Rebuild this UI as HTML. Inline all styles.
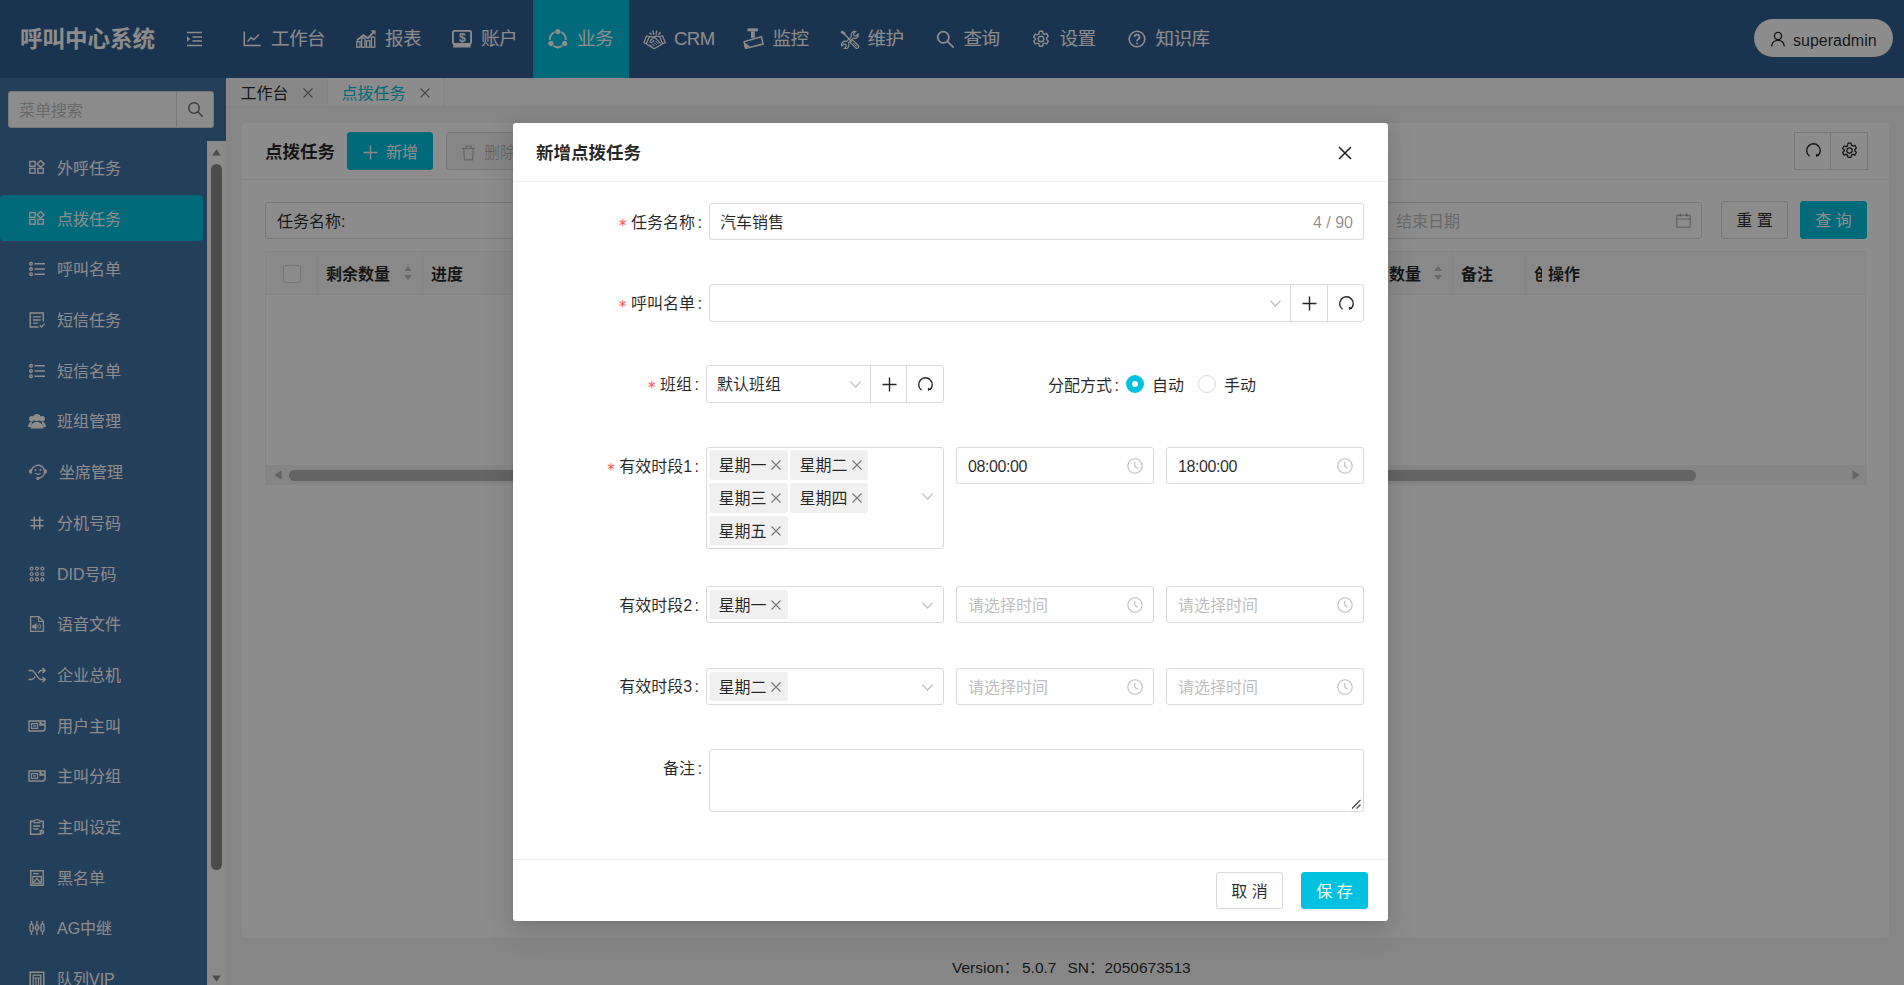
<!DOCTYPE html>
<html lang="zh-CN">
<head>
<meta charset="utf-8">
<title>呼叫中心系统</title>
<style>
*{box-sizing:border-box;margin:0;padding:0}
html,body{width:1904px;height:985px;overflow:hidden}
body{font-family:"Liberation Sans","Noto Sans CJK SC",sans-serif;font-size:16px;color:rgba(0,0,0,.85);background:#f4f4f4;position:relative}
svg{display:block}
.abs{position:absolute}
/* ---------- header ---------- */
#hdr{position:absolute;left:0;top:0;width:1904px;height:78px;background:#315f90;color:#fff}
#logo{position:absolute;left:20px;top:0;line-height:79px;font-size:22.5px;font-weight:700;white-space:nowrap}
#fold{position:absolute;left:186px;top:31px}
#nav{position:absolute;left:227px;top:0;height:78px;display:flex}
#nav .it{height:78px;padding:0 16px;display:flex;align-items:center;font-size:18.6px;letter-spacing:-0.6px;white-space:nowrap;line-height:76px}
#nav .it svg{width:18px;height:18px;margin-right:10px;flex:none}
#nav .it.on{background:#00c2e0}
#user{position:absolute;left:1754px;top:19px;width:139px;height:38px;border-radius:19px;background:#fff;color:rgba(0,0,0,.85);font-size:16px;line-height:43px;padding-left:39px;white-space:nowrap}
#user svg{position:absolute;left:16px;top:12px}
/* ---------- sidebar ---------- */
#side{position:absolute;left:0;top:78px;width:226px;height:907px;background:#4373a5;color:#fff;overflow:hidden}
#search{position:absolute;left:8px;top:13px;width:206px;height:37px;background:#fff;border:1px solid #d9d9d9;border-radius:3px}
#search span{position:absolute;left:10px;top:0;line-height:37px;color:#bfbfbf;font-size:16px}
#search i{position:absolute;left:167px;top:0;width:1px;height:35px;background:#d9d9d9}
#search svg{position:absolute;left:178px;top:9px}
#menu{position:absolute;left:0;top:63px;width:207px}
#menu .mi{position:absolute;left:0;width:203px;height:46.7px;line-height:50.3px;font-size:16px;padding-left:57px;white-space:nowrap;border-radius:4px}
#menu .mi.on{background:#00c2e0}
#menu .mi svg{position:absolute;left:29px;top:16px;width:16px;height:16px}
#sbar{position:absolute;left:207px;top:63px;width:19px;height:844px;background:#fcfcfc}
#sbar .th{position:absolute;left:4px;top:23px;width:11px;height:706px;border-radius:6px;background:#8b8b8b}
/* ---------- main ---------- */
#tabs{position:absolute;left:226px;top:78px;width:1678px;height:29px;background:#fafafa;border-bottom:1px solid #eee}
.tab{position:absolute;top:0;height:28px;line-height:31.5px;font-size:16px;white-space:nowrap;background:#f7f7f7;border-right:1px solid #eee}
.tab.on{background:#fff;color:#00c2e0}
.tab svg{position:absolute;top:10px}
#card{position:absolute;left:242px;top:123px;width:1647px;height:815px;background:#fff;border-radius:4px}
#chead{position:absolute;left:0;top:0;width:100%;height:57px;border-bottom:1px solid #f0f0f0}
.btn{position:absolute;height:37px;line-height:37px;border:1px solid #d9d9d9;border-radius:3px;background:#fff;font-size:16px;text-align:center;white-space:nowrap}
.btn.pri{background:#00c2e0;border-color:#00c2e0;color:#fff}
.inp{position:absolute;height:37px;border:1px solid #d9d9d9;border-radius:3px;background:#fff;font-size:16px;line-height:37px;white-space:nowrap}
.ph{color:#bfbfbf}
#foot{position:absolute;left:226px;top:954px;width:1678px;height:28px;font-size:15.500px;line-height:28px;white-space:nowrap}
#foot span{position:absolute;top:0}
.vs{top:0;width:1px;height:43px;background:#f0f0f0}
.srt{top:13px;width:9px;height:16px}
.srt:before,.srt:after{content:"";position:absolute;left:0;border:4.500px solid transparent}
.srt:before{top:-3px;border-bottom:5.500px solid #bfbfbf}
.srt:after{top:10px;border-top:5.500px solid #bfbfbf}
/* ---------- mask / modal ---------- */
#mask{position:absolute;left:0;top:0;width:1904px;height:985px;background:rgba(0,0,0,.45)}
#modal{position:absolute;left:513px;top:123px;width:875px;height:798px;background:#fff;border-radius:3px;box-shadow:0 3px 6px -4px rgba(0,0,0,.12),0 6px 16px 0 rgba(0,0,0,.08),0 9px 28px 8px rgba(0,0,0,.05)}
.lbl{position:absolute;text-align:right;line-height:39px;white-space:nowrap;font-size:16px}
.star{color:#ff4d4f;font-weight:400;font-family:"DejaVu Sans",sans-serif;font-size:15px;margin-right:4.500px;position:relative;top:2.500px}
.cl{margin-left:2.500px}
.fb{position:absolute;border:1px solid #d9d9d9;border-radius:3px;background:#fff;line-height:37px;font-size:16px;white-space:nowrap}
.fb .abs{top:0}
.fb svg.abs{top:auto}
.tag{position:absolute;width:79px;height:29.500px;line-height:31.500px;background:#f0f0f0;border-radius:3px;padding-left:9.500px;font-size:16px}
</style>
</head>
<body>
<!--HDR_S--><div id="hdr">
  <div id="logo">呼叫中心系统</div>
  <svg id="fold" width="17" height="16" viewBox="0 0 17 16" fill="none" stroke="#fff" stroke-width="1.3"><path d="M1 1.5h15M6.500 6h9.500M6.500 10h9.500M1 14.500h15"/><path d="M1 5.200l3.200 2.800L1 10.800z" fill="#fff" stroke="none"/></svg>
  <div id="nav">
    <div class="it"><svg viewBox="0 0 18 18" fill="none" stroke="#fff" stroke-width="1.500"><path d="M1.300 1.500v14H17.800"/><path d="M4.500 11.800l3.600-4.300 2.600 2.300 5.200-5.300" stroke-width="1.400"/></svg>工作台</div>
    <div class="it"><svg viewBox="0 0 20 18" style="width:20px;margin-left:-1px;margin-right:9px" fill="none" stroke="#fff" stroke-width="1.300"><rect x=".700" y="11.600" width="3.300" height="5.600"/><rect x="5.600" y="8" width="3.300" height="9.200"/><rect x="10.500" y="10.800" width="3.300" height="6.400"/><rect x="15.400" y="7.100" width="3.300" height="10.100"/><path d="M1 10.200l6.500-5 4.500 3 5.500-6" stroke-width="1.800"/><path d="M14.600 .200h4.900v4.900z" fill="#fff" stroke="none"/></svg>报表</div>
    <div class="it"><svg viewBox="0 0 20 18" style="width:20px;margin-left:-1px;margin-right:9px" fill="none" stroke="#fff"><rect x=".900" y=".900" width="18.200" height="13" rx="1.500" stroke-width="1.800"/><rect x="1.200" y="13.900" width="17.400" height="3.600" fill="#fff" stroke="none"/><text x="10" y="12.300" font-family="Liberation Sans,sans-serif" font-size="12" font-weight="700" fill="#fff" stroke="none" text-anchor="middle">$</text></svg>账户</div>
    <div class="it on"><svg viewBox="0 0 20 20" style="width:20px;height:20px;margin-left:-1px;margin-right:9px" fill="none" stroke="#fff" stroke-width="2"><path d="M13.140 3.140A7.900 7.900 0 0 1 17.670 10.990M14.330 16.770A7.900 7.900 0 0 1 5.270 16.770M1.930 10.990A7.900 7.900 0 0 1 6.460 3.140"/><circle cx="9.800" cy="2.600" r="2.600" fill="#fff" stroke="none"/><circle cx="2.900" cy="14.400" r="2.600" fill="#fff" stroke="none"/><circle cx="16.700" cy="14.400" r="2.600" fill="#fff" stroke="none"/></svg>业务</div>
    <div class="it"><svg viewBox="0 0 23 19" style="width:23px;height:19px;margin-left:-2px;margin-right:8px" fill="none" stroke="#fff" stroke-width="1.200" stroke-linejoin="round"><path d="M.800 12.800L3.600 5.800l2.600.9-2.800 7.100zM16.800 6.700l2.600-.9 3 6.800-2.800 1.200z"/><path d="M6 6.900q2.600-.6 4.500.2l1.500-.7q2.600-.5 5 .4"/><path d="M3.500 13.900l6.300 4.200q1.700.7 3.200-.4l6.600-3.900"/><path d="M7 10.800l3.300-3.200 2 .3 5.200 5.400M6.600 11.500q1.200 1.400 3 .2l1.600-1.400"/><path d="M9 13.500l2.600 2.600M11 12.300l2.800 2.800M12.800 11.200l2.700 2.700M6.500 14.500l3 2.200" stroke-width="1"/><path d="M6.500 2.700l2 2M9.800.500l1 4.200M13.800.500l-.8 4.200M17.500 2.200l-2 2.500" stroke-width="1.400"/></svg>CRM</div>
    <div class="it"><svg viewBox="0 0 21 21" style="width:21px;height:21px;margin-left:-3.5px;margin-right:8.5px;position:relative;top:-1px" fill="#fff"><rect x="4.400" y=".400" width="10.500" height="2.900"/><rect x="8" y="3.300" width="3.800" height="6.500"/><path d="M1.200 13.600L18.500 8.800l1.500 7.300L2.600 20.400z" fill="none" stroke="#fff" stroke-width="1.500"/><path d="M.500 14l6.500 4.300-5 2z"/></svg>监控</div>
    <div class="it"><svg viewBox="0 0 20 19" style="width:20px;height:19px;margin-left:-1px;margin-right:8px" fill="none" stroke="#fff" stroke-width="1.200"><path d="M1.200 1.200l3.800 3" stroke-width="2.600"/><path d="M4.600 4.300l6.200 6.400" stroke-width="1.400"/><path d="M10 12.300l2.400-2.400 5.800 5.600a1.700 1.700 0 0 1-2.400 2.400z"/><path d="M13 12.800l3.700 3.700" stroke-width=".9"/><path d="M11.600 6.300a3.400 3.400 0 0 1 4-4.800l-2.100 2.100.5 2 2 .5 2.100-2.100a3.400 3.400 0 0 1-4.800 4l-5.200 5.300M11.600 6.300l-5.200 5.300a3.400 3.400 0 0 0-4.600 4.400l2-2 2 .5.500 2-2 2a3.400 3.400 0 0 0 4.200-4.700"/></svg>维护</div>
    <div class="it"><svg viewBox="0 0 18 18" fill="none" stroke="#fff" stroke-width="1.700"><circle cx="7.300" cy="7.300" r="5.600"/><path d="M11.400 11.400l5.800 5.800" stroke-linecap="round"/></svg>查询</div>
    <div class="it"><svg viewBox="0 0 18 18" fill="none" stroke="#fff" stroke-width="1.400"><circle cx="9" cy="9" r="2.800"/><path d="M7.400 1.200h3.200l.5 2.300 1.400.8 2.200-.8 1.600 2.800-1.700 1.600v1.600l1.700 1.600-1.600 2.800-2.200-.8-1.400.8-.5 2.300H7.400l-.5-2.300-1.400-.8-2.200.8-1.600-2.800 1.700-1.600V8.500L1.700 6.900l1.600-2.800 2.200.8 1.400-.8z" stroke-linejoin="round"/></svg>设置</div>
    <div class="it"><svg viewBox="0 0 18 18" fill="none" stroke="#fff" stroke-width="1.600"><circle cx="9" cy="9" r="7.800"/><path d="M6.500 7.100a2.500 2.500 0 1 1 3.700 2.200c-.8.500-1.200 1-1.200 2" stroke-width="1.700"/><circle cx="9" cy="13.400" r="1" fill="#fff" stroke="none"/></svg>知识库</div>
  </div>
  <div id="user"><svg width="16" height="16" viewBox="0 0 16 16" fill="none" stroke="rgba(0,0,0,.85)" stroke-width="1.400"><circle cx="8" cy="5" r="3.600"/><path d="M1.600 15.300c.4-3.600 3-5.900 6.400-5.900s6 2.300 6.400 5.900"/></svg>superadmin</div>
</div>
<!--HDR_E-->
<!--SIDE_S--><div id="side">
<div id="search"><span>菜单搜索</span><i></i><svg width="17" height="17" viewBox="0 0 17 17" fill="none" stroke="rgba(0,0,0,.55)" stroke-width="1.500"><circle cx="7" cy="7" r="5.200"/><path d="M10.800 10.800l5 5"/></svg></div>
<div id="menu">
<div class="mi" style="top:3.00px"><svg viewBox="0 0 16 14" style="height:14px" fill="none" stroke="#fff" stroke-width="1.400"><rect x=".800" y="1.500" width="5.300" height="4.800"/><rect x=".800" y="8.400" width="5.300" height="4.800"/><rect x="8.900" y="8.400" width="5.300" height="4.800"/><path d="M11.600 .500l3.500 3.400-3.500 3.400L8.100 3.900z"/></svg>外呼任务</div>
<div class="mi on" style="top:53.69px"><svg viewBox="0 0 16 14" style="height:14px" fill="none" stroke="#fff" stroke-width="1.400"><rect x=".800" y="1.500" width="5.300" height="4.800"/><rect x=".800" y="8.400" width="5.300" height="4.800"/><rect x="8.900" y="8.400" width="5.300" height="4.800"/><path d="M11.600 .500l3.500 3.400-3.500 3.400L8.100 3.900z"/></svg>点拨任务</div>
<div class="mi" style="top:104.38px"><svg viewBox="0 0 16 16" fill="none" stroke="#fff" stroke-width="1.4"><path d="M5.500 2.800H16M5.500 8H16M5.500 13.200H16" stroke-width="1.500"/><circle cx="2" cy="2.800" r="1.300"/><circle cx="2" cy="8" r="1.300"/><circle cx="2" cy="13.200" r="1.300"/></svg>呼叫名单</div>
<div class="mi" style="top:155.07px"><svg viewBox="0 0 16 16" fill="none" stroke="#fff" stroke-width="1.400"><path d="M14.300 9.500V1H1.200v14h8.300"/><path d="M4 4.800h7.800M4 8h7.800M4 11.200h4.800" stroke-width="1.300"/><path d="M10.800 13.300l1.700 1.700 3-3.400" stroke-width="1.300"/></svg>短信任务</div>
<div class="mi" style="top:205.76px"><svg viewBox="0 0 16 16" fill="none" stroke="#fff" stroke-width="1.4"><path d="M5.500 2.800H16M5.500 8H16M5.500 13.200H16" stroke-width="1.500"/><circle cx="2" cy="2.800" r="1.300"/><circle cx="2" cy="8" r="1.300"/><circle cx="2" cy="13.200" r="1.300"/></svg>短信名单</div>
<div class="mi" style="top:256.45px"><svg viewBox="0 0 18 16" style="width:18px;left:28px" fill="#fff"><circle cx="9" cy="4.600" r="3.700"/><path d="M2.600 15.500c0-4.200 2.800-6.600 6.400-6.600s6.400 2.400 6.400 6.600z"/><circle cx="3.800" cy="5.800" r="2.700"/><circle cx="14.200" cy="5.800" r="2.700"/><path d="M0 14c0-3 1.600-5 4.200-5.200L3 14zM18 14c0-3-1.600-5-4.200-5.200L15 14z"/></svg>班组管理</div>
<div class="mi" style="top:307.14px;padding-left:59px"><svg viewBox="0 0 19 17" style="width:20px;height:18px;left:28px;top:14.5px" fill="none" stroke="#fff" stroke-width="1.400"><path d="M3.200 9.500A6.300 6.300 0 0 1 15.800 7.500c0 3.500-2.200 6.300-5.500 6.700" /><path d="M3.200 5.600c-1.600 0-2.300 1-2.300 2.300s.7 2.300 2.300 2.300zM15.800 5.600c1.600 0 2.300 1 2.300 2.300s-.7 2.300-2.300 2.300z" fill="#fff" stroke="none"/><circle cx="9.300" cy="14.600" r="1.500" fill="#fff" stroke="none"/><circle cx="7.200" cy="6.600" r="1" fill="#fff" stroke="none"/><circle cx="11.800" cy="6.600" r="1" fill="#fff" stroke="none"/><path d="M7 9.600c1.400 1.300 3.600 1.300 5 0" stroke-width="1.200"/></svg>坐席管理</div>
<div class="mi" style="top:357.83px"><svg viewBox="0 0 16 16" fill="none" stroke="#fff" stroke-width="1.500"><path d="M5.300 1.500v13M10.700 1.500v13M1.500 5.300h13M1.500 10.700h13"/></svg>分机号码</div>
<div class="mi" style="top:408.52px"><svg viewBox="0 0 16 16" fill="none" stroke="#fff" stroke-width="1.200"><circle cx="2.600" cy="2.600" r="1.500"/><circle cx="8" cy="2.600" r="1.500"/><circle cx="13.400" cy="2.600" r="1.500"/><circle cx="2.600" cy="8" r="1.500"/><circle cx="8" cy="8" r="1.500"/><circle cx="13.400" cy="8" r="1.500"/><circle cx="2.600" cy="13.400" r="1.500"/><circle cx="8" cy="13.400" r="1.500"/><circle cx="13.400" cy="13.400" r="1.500"/></svg>DID号码</div>
<div class="mi" style="top:459.21px"><svg viewBox="0 0 16 16" fill="none" stroke="#fff" stroke-width="1.300"><path d="M1.600 .700h8.300l4.500 4.500v10.100H1.600z"/><path d="M9.600 .800v4.700h4.700" stroke-width="1.100"/><path d="M3.600 9.200h1.600l2-1.600v6l-2-1.600H3.600z" fill="#fff" stroke-width=".6"/><path d="M8.600 8.800c.8 1 .8 2.400 0 3.400M10.300 7.600c1.500 1.800 1.500 4 0 5.800" stroke-width="1"/></svg>语音文件</div>
<div class="mi" style="top:509.90px"><svg viewBox="0 0 18 16" style="width:18px;left:28px" fill="none" stroke="#fff" stroke-width="1.400"><path d="M.500 3.500h3.200c3.500 0 5.600 9 9.200 9H17M.500 12.500h3.200c1.400 0 2.500-1.400 3.500-3M10.200 6.300c.9-1.500 1.800-2.800 2.700-2.800H17"/><path d="M14.500 1l2.700 2.500-2.700 2.500M14.500 10l2.700 2.500-2.700 2.500"/></svg>企业总机</div>
<div class="mi" style="top:560.59px"><svg viewBox="0 0 18 16" style="width:18px;left:28px" fill="none" stroke="#fff" stroke-width="1.500"><path d="M1 3h16v7.500c0 1.500-1 2.500-2.500 2.500H1z"/><rect x="3.600" y="5.600" width="6" height="4.800" stroke-width="1.100"/><path d="M5.200 7.400h2.800M5.200 8.800h2.800" stroke-width=".8"/><path d="M12.500 3.500v3.200h4" stroke-width="2.200"/></svg>用户主叫</div>
<div class="mi" style="top:611.28px"><svg viewBox="0 0 18 16" style="width:18px;left:28px" fill="none" stroke="#fff" stroke-width="1.500"><path d="M1 3h16v7.500c0 1.500-1 2.500-2.500 2.500H1z"/><rect x="3.600" y="5.600" width="6" height="4.800" stroke-width="1.100"/><path d="M5.200 7.400h2.800M5.200 8.800h2.800" stroke-width=".8"/><path d="M12.500 3.500v3.200h4" stroke-width="2.200"/></svg>主叫分组</div>
<div class="mi" style="top:661.97px"><svg viewBox="0 0 16 16" fill="none" stroke="#fff" stroke-width="1.500"><path d="M4.200 2.300H1.600v13h10.800"/><path d="M11.800 2.300h2.400v7.500"/><path d="M5 3.600V1.500l3-1 3 1v2.100z" stroke-width="1.200"/><path d="M4.300 7h7M4.300 10h5" stroke-width="1.300"/><circle cx="12.800" cy="12.800" r="1.700" stroke-width="1.300"/><path d="M10.500 11.300l4.600 3" stroke-width="1"/></svg>主叫设定</div>
<div class="mi" style="top:712.66px"><svg viewBox="0 0 16 16" fill="none" stroke="#fff" stroke-width="1.400"><path d="M1.800 .800h12.400v14.400H1.800z"/><path d="M4.200 3.600h5.400" stroke-width="1.300"/><rect x="3.800" y="6.500" width="8.400" height="6.800" stroke-width="1.200"/><path d="M4.200 13l3.800-4.600 3.800 4.600" stroke-width="1.200"/></svg>黑名单</div>
<div class="mi" style="top:763.35px"><svg viewBox="0 0 16 16" fill="none" stroke="#fff" stroke-width="1.300"><path d="M2.500 1v3M2.500 11.500V15M8 1v4M8 10.500V15M13.500 1v3M13.500 11.500V15"/><rect x="1" y="4" width="3" height="7.500" rx="1.500"/><rect x="6.600" y="5.200" width="2.800" height="5" rx="1.400"/><rect x="12" y="4" width="3" height="7.500" rx="1.500"/><path d="M4 8h2.600M9.400 8H12" stroke-width="1"/></svg>AG中继</div>
<div class="mi" style="top:814.04px"><svg viewBox="0 0 16 16" fill="none" stroke="#fff" stroke-width="1.500"><path d="M1.200 15.500V1.200h13.600v14.300"/><path d="M4.200 15.500V4.200h7.600v11.300" stroke-width="1.300"/><path d="M7 7v8.500M9.500 7v8.500M4.500 7h7" stroke-width="1.200"/></svg>队列VIP</div>
</div>
<div id="sbar"><svg class="abs" style="left:5px;top:8px" width="9" height="7" viewBox="0 0 9 7"><path d="M4.500 .300L8.800 6.500H.200z" fill="#8b8b8b"/></svg><div class="th"></div><svg class="abs" style="left:5px;top:834px" width="9" height="7" viewBox="0 0 9 7"><path d="M4.500 6.700L8.800 .500H.200z" fill="#8b8b8b"/></svg></div>
</div><!--SIDE_E-->
<!--MAIN_S--><div id="tabs">
  <div class="tab" style="left:0;width:102px;padding-left:14.500px">工作台<svg style="left:77px" width="10" height="10" viewBox="0 0 10 10" stroke="rgba(0,0,0,.5)" stroke-width="1.100"><path d="M.500 .500l9 9M9.500 .500l-9 9"/></svg></div>
  <div class="tab on" style="left:102px;width:116px;padding-left:13.500px">点拨任务<svg style="left:92px" width="10" height="10" viewBox="0 0 10 10" stroke="rgba(0,0,0,.5)" stroke-width="1.100"><path d="M.500 .500l9 9M9.500 .500l-9 9"/></svg></div>
</div>
<div id="card">
  <div id="chead">
    <div class="abs" style="left:23px;top:0;line-height:58px;font-size:17.500px;font-weight:700;white-space:nowrap">点拨任务</div>
    <div class="btn pri" style="left:105px;top:9px;height:38px;line-height:39px;width:86px;text-align:left;padding-left:38px"><svg class="abs" style="left:15px;top:12px" width="15" height="15" viewBox="0 0 15 15" stroke="#fff" stroke-width="1.300"><path d="M7.500 .500v14M.500 7.500h14"/></svg>新增</div>
    <div class="btn" style="left:204px;top:9px;height:38px;line-height:39px;width:90px;text-align:left;padding-left:37px;background:#f5f5f5;color:rgba(0,0,0,.25)"><svg class="abs" style="left:14px;top:11.500px" width="15" height="16" viewBox="0 0 15 16" fill="none" stroke="rgba(0,0,0,.25)" stroke-width="1.200"><path d="M1 3.500h13M5 3.200V1.200h5v2M2.800 3.800l.6 11h8.200l.6-11"/></svg>删除</div>
    <div class="btn" style="left:1552px;top:9px;height:38px;width:37px;border-radius:0"><svg class="abs" style="left:10px;top:9px" width="17" height="17" viewBox="0 0 17 17" fill="none" stroke="rgba(0,0,0,.85)" stroke-width="1.400"><path d="M4.600 14.200A6.800 6.800 0 1 1 12.600 14"/><path d="M14.300 13.100l-3.200 1.900-.3-3.300z" fill="rgba(0,0,0,.85)" stroke="none"/></svg></div>
    <div class="btn" style="left:1588px;top:9px;height:38px;width:38px;border-radius:0"><svg class="abs" style="left:10px;top:9px" width="17" height="17" viewBox="0 0 18 18" fill="none" stroke="rgba(0,0,0,.85)" stroke-width="1.300"><circle cx="9" cy="9" r="2.800"/><path d="M7.400 1.200h3.200l.5 2.300 1.400.8 2.200-.8 1.600 2.800-1.700 1.600v1.600l1.700 1.600-1.600 2.800-2.200-.8-1.400.8-.5 2.300H7.400l-.5-2.300-1.400-.8-2.200.8-1.600-2.800 1.700-1.600V8.500L1.700 6.900l1.600-2.800 2.200.8 1.400-.8z" stroke-linejoin="round"/></svg></div>
  </div>
  <!-- filter row -->
  <div class="inp" style="left:23px;top:79px;width:400px;padding-left:11px">任务名称:</div>
  <div class="inp" style="left:1000px;top:79px;width:460px;padding-left:153px"><span class="ph">结束日期</span><svg class="abs" style="left:433px;top:10px" width="15" height="15" viewBox="0 0 15 15" fill="none" stroke="rgba(0,0,0,.3)" stroke-width="1.200"><rect x=".800" y="2.200" width="13.400" height="12"/><path d="M.800 6h13.400M4.200 .400v3.400M10.800 .400v3.400"/></svg></div>
  <div class="btn" style="left:1479px;top:78px;width:67px;height:38px;line-height:38px">重 置</div>
  <div class="btn pri" style="left:1558px;top:78px;width:67px;height:38px;line-height:38px">查 询</div>
  <!-- table -->
  <div id="tbl" class="abs" style="left:23px;top:128px;width:1601px;height:214px;border:1px solid #f0f0f0;border-bottom:0">
    <div class="abs" style="left:0;top:0;width:1599px;height:43px;background:#fafafa;border-bottom:1px solid #f0f0f0;font-weight:700;font-size:16px;line-height:45px;white-space:nowrap;overflow:hidden">
      <i class="abs" style="left:17px;top:13px;width:18px;height:18px;border:1px solid #d9d9d9;border-radius:3px;background:#fff"></i>
      <i class="abs vs" style="left:51px"></i>
      <span class="abs" style="left:60px;top:0">剩余数量</span>
      <span class="abs srt" style="left:138px"></span>
      <i class="abs vs" style="left:156px"></i>
      <span class="abs" style="left:165px;top:0">进度</span>
      <span class="abs" style="left:1091px;top:0">剩余数量</span>
      <span class="abs srt" style="left:1168px"></span>
      <i class="abs vs" style="left:1186px"></i>
      <span class="abs" style="left:1195px;top:0">备注</span>
      <i class="abs vs" style="left:1259px"></i>
      <span class="abs" style="left:1268px;top:0;width:7.500px;overflow:hidden">创建</span>
      <span class="abs" style="left:1282px;top:0">操作</span>
    </div>
  </div>
  <div id="hsb" class="abs" style="left:23px;top:342px;width:1602px;height:20px;background:#f2f2f2">
    <svg class="abs" style="left:9px;top:5px" width="8" height="10" viewBox="0 0 8 10"><path d="M.300 5L7.500 .300v9.400z" fill="#b6b6b6"/></svg>
    <div class="abs" style="left:24px;top:5px;width:1407px;height:11px;border-radius:6px;background:#b6b6b6"></div>
    <svg class="abs" style="left:1587px;top:5px" width="8" height="10" viewBox="0 0 8 10"><path d="M7.700 5L.500 .300v9.400z" fill="#b6b6b6"/></svg>
  </div>
</div>
<div id="foot"><span style="left:726px">Version：</span><span style="left:796px">5.0.7</span><span style="left:841.500px">SN：</span><span style="left:878.500px">2050673513</span></div>
<!--MAIN_E-->
<div id="mask"></div>
<!--MODAL_S--><div id="modal">
<div class="abs" style="left:0;top:0;width:875px;height:59px;border-bottom:1px solid #f0f0f0"></div>
<div class="abs" style="left:23px;top:0;line-height:60px;font-size:17.500px;font-weight:700;white-space:nowrap">新增点拨任务</div>
<svg class="abs" style="left:825px;top:23px" width="14" height="14" viewBox="0 0 14 14" stroke="rgba(0,0,0,.88)" stroke-width="1.500"><path d="M1 1l12 12M13 1L1 13"/></svg>
<div class="lbl" style="left:0px;top:80px;width:189px"><b class="star">*</b>任务名称<span class="cl">:</span></div>
<div class="fb" style="left:196px;top:80px;width:655px;height:37px;"><span class="abs" style="left:10px">汽车销售</span><span class="abs" style="right:10px;color:rgba(0,0,0,.45)">4 / 90</span></div>
<div class="lbl" style="left:0px;top:161px;width:189px"><b class="star">*</b>呼叫名单<span class="cl">:</span></div>
<div class="fb" style="left:196px;top:161px;width:582px;height:38px;border-radius:3px 0 0 3px"><svg class="abs" style="left:560px;top:15px" width="11" height="7" viewBox="0 0 11 7" fill="none" stroke="rgba(0,0,0,.28)" stroke-width="1.100"><path d="M.500 .700l5 5.400 5-5.400"/></svg></div>
<div class="fb" style="left:777px;top:161px;width:38px;height:38px;border-radius:0"><svg class="abs" style="left:11px;top:11px" width="15" height="15" viewBox="0 0 15 15" stroke="rgba(0,0,0,.85)" stroke-width="1.400"><path d="M7.500 .500v14M.500 7.500h14"/></svg></div>
<div class="fb" style="left:814px;top:161px;width:37px;height:38px;border-radius:0 3px 3px 0"><svg class="abs" style="left:10px;top:10px" width="17" height="17" viewBox="0 0 17 17" fill="none" stroke="rgba(0,0,0,.85)" stroke-width="1.400"><path d="M4.600 14.200A6.800 6.800 0 1 1 12.600 14"/><path d="M14.300 13.100l-3.200 1.900-.3-3.300z" fill="rgba(0,0,0,.85)" stroke="none"/></svg></div>
<div class="lbl" style="left:0px;top:242px;width:186px"><b class="star">*</b>班组<span class="cl">:</span></div>
<div class="fb" style="left:193px;top:242px;width:165px;height:38px;border-radius:3px 0 0 3px"><span class="abs" style="left:10px">默认班组</span><svg class="abs" style="left:143px;top:15px" width="11" height="7" viewBox="0 0 11 7" fill="none" stroke="rgba(0,0,0,.28)" stroke-width="1.100"><path d="M.500 .700l5 5.400 5-5.400"/></svg></div>
<div class="fb" style="left:357px;top:242px;width:37px;height:38px;border-radius:0"><svg class="abs" style="left:11px;top:11px" width="15" height="15" viewBox="0 0 15 15" stroke="rgba(0,0,0,.85)" stroke-width="1.400"><path d="M7.500 .500v14M.500 7.500h14"/></svg></div>
<div class="fb" style="left:393px;top:242px;width:38px;height:38px;border-radius:0 3px 3px 0"><svg class="abs" style="left:10px;top:10px" width="17" height="17" viewBox="0 0 17 17" fill="none" stroke="rgba(0,0,0,.85)" stroke-width="1.400"><path d="M4.600 14.200A6.800 6.800 0 1 1 12.600 14"/><path d="M14.300 13.100l-3.200 1.900-.3-3.300z" fill="rgba(0,0,0,.85)" stroke="none"/></svg></div>
<div class="abs" style="left:535px;top:243px;line-height:39px;white-space:nowrap">分配方式<span class="cl">:</span></div>
<i class="abs" style="left:613px;top:252px;width:18px;height:18px;border-radius:9px;border:6.500px solid #00c2e0;background:#fff"></i>
<div class="abs" style="left:639px;top:243px;line-height:39px">自动</div>
<i class="abs" style="left:685px;top:252px;width:18px;height:18px;border-radius:9px;border:1px solid #d9d9d9;background:#fff"></i>
<div class="abs" style="left:711px;top:243px;line-height:39px">手动</div>
<div class="lbl" style="left:0px;top:324px;width:186px"><b class="star">*</b>有效时段1<span class="cl">:</span></div>
<div class="fb" style="left:193px;top:324px;width:238px;height:102px;"><span class="tag" style="left:2px;top:2px;width:79px">星期一<svg class="abs" style="left:62px;top:10px" width="10" height="10" viewBox="0 0 10 10" stroke="rgba(0,0,0,.5)" stroke-width="1.100"><path d="M.500 .500l9 9M9.500 .500l-9 9"/></svg></span><span class="tag" style="left:83px;top:2px;width:78px">星期二<svg class="abs" style="left:62px;top:10px" width="10" height="10" viewBox="0 0 10 10" stroke="rgba(0,0,0,.5)" stroke-width="1.100"><path d="M.500 .500l9 9M9.500 .500l-9 9"/></svg></span><span class="tag" style="left:2px;top:35px;width:79px">星期三<svg class="abs" style="left:62px;top:10px" width="10" height="10" viewBox="0 0 10 10" stroke="rgba(0,0,0,.5)" stroke-width="1.100"><path d="M.500 .500l9 9M9.500 .500l-9 9"/></svg></span><span class="tag" style="left:83px;top:35px;width:78px">星期四<svg class="abs" style="left:62px;top:10px" width="10" height="10" viewBox="0 0 10 10" stroke="rgba(0,0,0,.5)" stroke-width="1.100"><path d="M.500 .500l9 9M9.500 .500l-9 9"/></svg></span><span class="tag" style="left:2px;top:67.5px;width:79px">星期五<svg class="abs" style="left:62px;top:10px" width="10" height="10" viewBox="0 0 10 10" stroke="rgba(0,0,0,.5)" stroke-width="1.100"><path d="M.500 .500l9 9M9.500 .500l-9 9"/></svg></span><svg class="abs" style="left:215px;top:45px" width="11" height="7" viewBox="0 0 11 7" fill="none" stroke="rgba(0,0,0,.28)" stroke-width="1.100"><path d="M.500 .700l5 5.400 5-5.400"/></svg></div>
<div class="fb" style="left:443px;top:324px;width:198px;height:37px;"><span class="abs" style="left:11px;letter-spacing:-.4px">08:00:00</span><svg class="abs" style="left:170px;top:10px" width="16" height="16" viewBox="0 0 16 16" fill="none" stroke="rgba(0,0,0,.26)" stroke-width="1.100"><circle cx="8" cy="8" r="7.200"/><path d="M7.800 3.800v4.500l2.800 2"/></svg></div>
<div class="fb" style="left:653px;top:324px;width:198px;height:37px;"><span class="abs" style="left:11px;letter-spacing:-.4px">18:00:00</span><svg class="abs" style="left:170px;top:10px" width="16" height="16" viewBox="0 0 16 16" fill="none" stroke="rgba(0,0,0,.26)" stroke-width="1.100"><circle cx="8" cy="8" r="7.200"/><path d="M7.800 3.800v4.500l2.800 2"/></svg></div>
<div class="lbl" style="left:0px;top:463px;width:186px">有效时段2<span class="cl">:</span></div>
<div class="fb" style="left:193px;top:463px;width:238px;height:37px;"><span class="tag" style="left:2px;top:2.5px;width:79px">星期一<svg class="abs" style="left:62px;top:10px" width="10" height="10" viewBox="0 0 10 10" stroke="rgba(0,0,0,.5)" stroke-width="1.100"><path d="M.500 .500l9 9M9.500 .500l-9 9"/></svg></span><svg class="abs" style="left:215px;top:15px" width="11" height="7" viewBox="0 0 11 7" fill="none" stroke="rgba(0,0,0,.28)" stroke-width="1.100"><path d="M.500 .700l5 5.400 5-5.400"/></svg></div>
<div class="fb" style="left:443px;top:463px;width:198px;height:37px;"><span class="abs ph" style="left:11px">请选择时间</span><svg class="abs" style="left:170px;top:10px" width="16" height="16" viewBox="0 0 16 16" fill="none" stroke="rgba(0,0,0,.26)" stroke-width="1.100"><circle cx="8" cy="8" r="7.200"/><path d="M7.800 3.800v4.500l2.800 2"/></svg></div>
<div class="fb" style="left:653px;top:463px;width:198px;height:37px;"><span class="abs ph" style="left:11px">请选择时间</span><svg class="abs" style="left:170px;top:10px" width="16" height="16" viewBox="0 0 16 16" fill="none" stroke="rgba(0,0,0,.26)" stroke-width="1.100"><circle cx="8" cy="8" r="7.200"/><path d="M7.800 3.800v4.500l2.800 2"/></svg></div>
<div class="lbl" style="left:0px;top:544px;width:186px">有效时段3<span class="cl">:</span></div>
<div class="fb" style="left:193px;top:545px;width:238px;height:37px;"><span class="tag" style="left:2px;top:2.5px;width:79px">星期二<svg class="abs" style="left:62px;top:10px" width="10" height="10" viewBox="0 0 10 10" stroke="rgba(0,0,0,.5)" stroke-width="1.100"><path d="M.500 .500l9 9M9.500 .500l-9 9"/></svg></span><svg class="abs" style="left:215px;top:15px" width="11" height="7" viewBox="0 0 11 7" fill="none" stroke="rgba(0,0,0,.28)" stroke-width="1.100"><path d="M.500 .700l5 5.400 5-5.400"/></svg></div>
<div class="fb" style="left:443px;top:545px;width:198px;height:37px;"><span class="abs ph" style="left:11px">请选择时间</span><svg class="abs" style="left:170px;top:10px" width="16" height="16" viewBox="0 0 16 16" fill="none" stroke="rgba(0,0,0,.26)" stroke-width="1.100"><circle cx="8" cy="8" r="7.200"/><path d="M7.800 3.800v4.500l2.800 2"/></svg></div>
<div class="fb" style="left:653px;top:545px;width:198px;height:37px;"><span class="abs ph" style="left:11px">请选择时间</span><svg class="abs" style="left:170px;top:10px" width="16" height="16" viewBox="0 0 16 16" fill="none" stroke="rgba(0,0,0,.26)" stroke-width="1.100"><circle cx="8" cy="8" r="7.200"/><path d="M7.800 3.800v4.500l2.800 2"/></svg></div>
<div class="lbl" style="left:0px;top:626px;width:189px">备注<span class="cl">:</span></div>
<div class="fb" style="left:196px;top:626px;width:655px;height:63px;"><svg class="abs" style="right:2px;bottom:2px" width="10" height="10" viewBox="0 0 10 10" stroke="rgba(0,0,0,.75)" stroke-width="1.100"><path d="M9.500 1L1 9.500M9.500 5.500l-4 4"/></svg></div>
<div class="abs" style="left:0;top:736px;width:875px;height:1px;background:#f0f0f0"></div>
<div class="btn" style="left:703px;top:749px;width:67px;box-shadow:0 2px 0 rgba(0,0,0,.016)">取 消</div>
<div class="btn pri" style="left:788px;top:749px;width:67px;box-shadow:0 2px 0 rgba(0,0,0,.045)">保 存</div>
</div><!--MODAL_E-->
</body>
</html>
